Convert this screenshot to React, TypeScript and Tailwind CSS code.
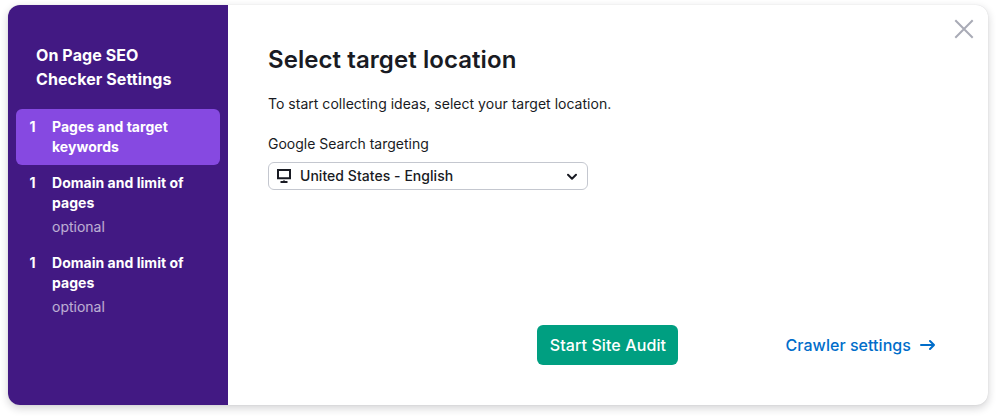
import React from "react";

type Step = { title: string; optional?: boolean; active?: boolean };

const steps: Step[] = [
  { title: "Pages and target keywords", active: true },
  { title: "Domain and limit of pages", optional: true },
  { title: "Domain and limit of pages", optional: true },
];

function StepItem({ title, optional, active }: Step) {
  return (
    <li
      className={`flex rounded-md pt-2 pr-4 pb-2 pl-[13px] text-sm leading-5 text-white ${
        active ? "bg-[#8649e1]" : ""
      }`}
    >
      <span className="w-[23px] shrink-0 pl-[0.5px] font-bold">1</span>
      <div>
        <div className="w-[140px] font-bold tracking-[0.002em]">{title}</div>
        {optional && <div className="mt-1 text-white/65">optional</div>}
      </div>
    </li>
  );
}

function Sidebar() {
  return (
    <aside className="w-[220px] shrink-0 bg-[#421983] px-2 pt-[38px]">
      <h2 className="mb-[18px] pl-5 text-base leading-6 font-bold tracking-[0.006em] text-white">
        On Page SEO
        <br />
        Checker Settings
      </h2>
      <ul>
        {steps.map((step, i) => (
          <StepItem key={i} {...step} />
        ))}
      </ul>
    </aside>
  );
}

export default function App() {
  return (
    <div className="h-[416px] w-[996px] bg-white px-2 pt-[5px] font-['Inter',sans-serif] text-[#191b23]">
      <div className="flex h-[400px] w-[980px] overflow-hidden rounded-xl bg-white shadow-[0_3px_8px_rgba(25,27,35,0.2),0_0_1px_rgba(25,27,35,0.16)]">
        <Sidebar />
        <main className="flex flex-1 flex-col pl-10">
          <div className="flex justify-between">
            <h1 className="mt-10 text-2xl leading-[30px] font-semibold tracking-[0.003em]">Select target location</h1>
            <button aria-label="Close" className="mt-[14px] mr-[14px] h-5 w-5">
              <svg width="20" height="20" viewBox="0 0 20 20" stroke="#a9abb6" strokeWidth="2" fill="none">
                <path d="M1.3 1.3 18.7 18.7M18.7 1.3 1.3 18.7" />
              </svg>
            </button>
          </div>
          <p className="mt-[19px] text-sm leading-5 tracking-[0.0015em]">
            To start collecting ideas, select your target location.
          </p>
          <label className="mt-5 text-sm leading-5">Google Search targeting</label>
          <button className="mt-2 flex h-7 w-80 items-center rounded-md border border-[#c4c7cf] pr-[9px] pl-2 text-sm leading-5 font-medium">
            <svg width="14" height="14" viewBox="0 0 14 14" fill="none" stroke="currentColor" strokeWidth="2">
              <path d="M1 1h12v8.3H1zM3.5 13h7M7 11.5v1.5" />
            </svg>
            <span className="ml-[9px] flex-1 text-left tracking-[0.003em]">United States - English</span>
            <svg className="translate-y-[0.5px]" width="12" height="8" viewBox="0 0 12 8" fill="none" stroke="currentColor" strokeWidth="2" strokeLinecap="round" strokeLinejoin="round">
              <path d="M2 2.3 6 6.3 10 2.3" />
            </svg>
          </button>
          <div className="mt-auto mb-10 flex items-center justify-between pr-[53px] pl-[269.4px]">
            <button className="h-10 w-[141px] rounded-md bg-[#009f81] text-base leading-6 font-medium tracking-[0.006em] whitespace-nowrap text-white">
              Start Site Audit
            </button>
            <a className="flex items-center text-base leading-6 font-medium tracking-[0.003em] whitespace-nowrap text-[#006dca]">
              Crawler settings
              <svg className="ml-[9px]" width="15" height="12" viewBox="0 0 15 12" fill="none" stroke="currentColor" strokeWidth="2" strokeLinecap="round" strokeLinejoin="round">
                <path d="M1 6h13M10 2 14 6 10 10" />
              </svg>
            </a>
          </div>
        </main>
      </div>
    </div>
  );
}
